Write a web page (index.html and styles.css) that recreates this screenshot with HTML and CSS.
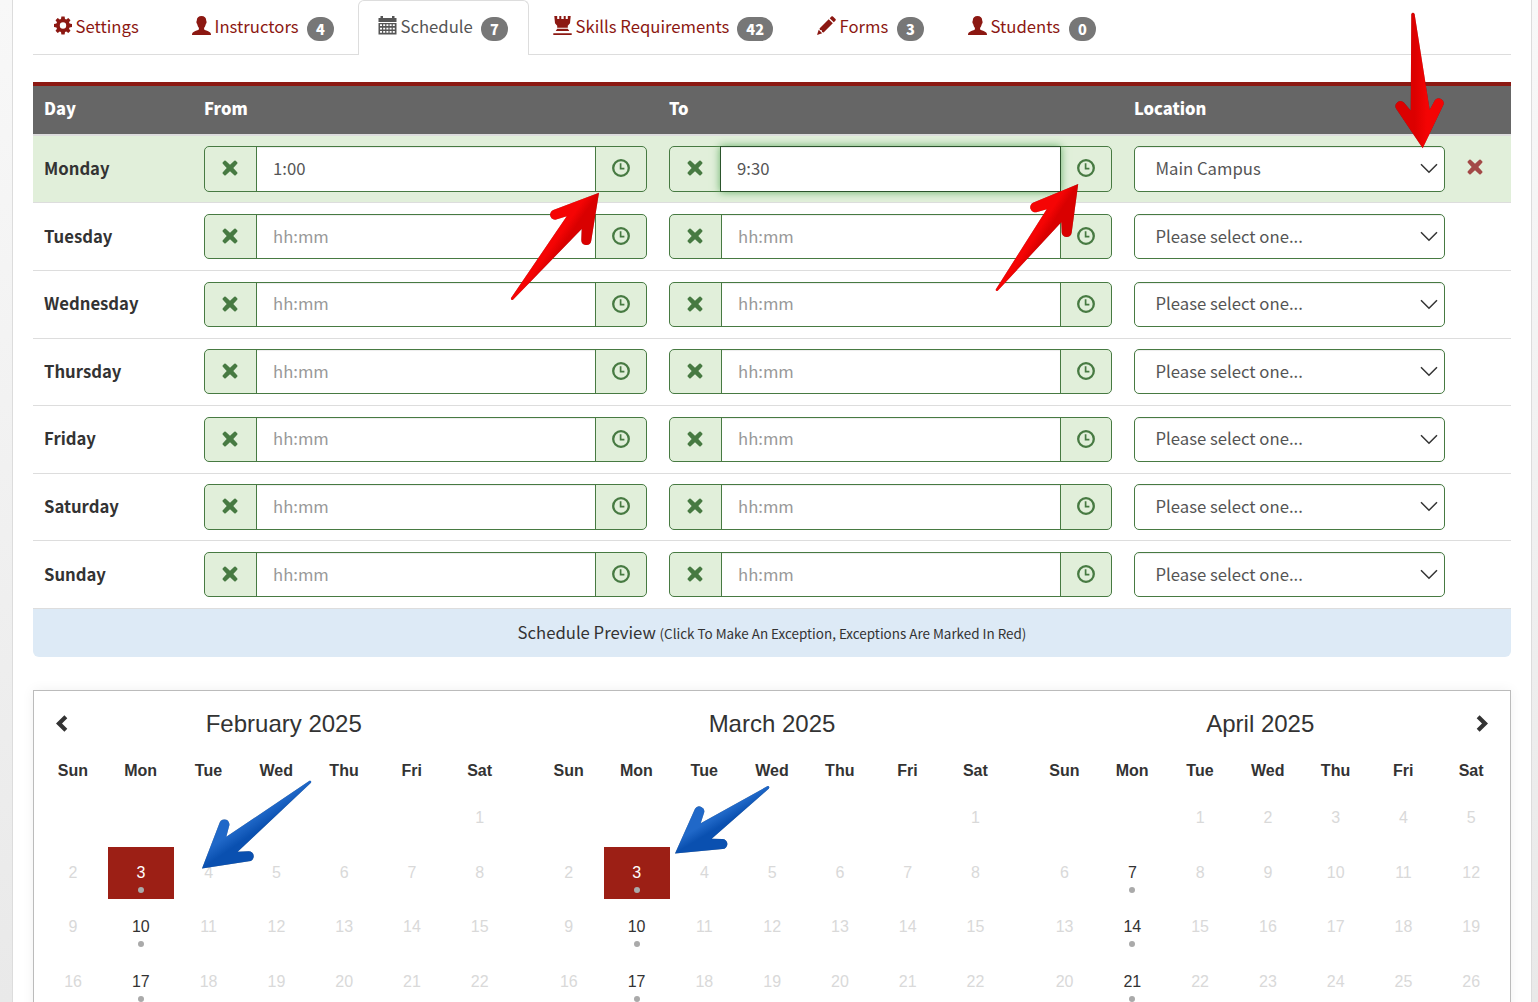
FILE: index.html
```html
<!DOCTYPE html>
<html lang="en">
<head>
  <meta charset="UTF-8">
  <title>Schedule</title>
  <meta name="viewport" content="width=device-width, initial-scale=1.0">
  <link rel="stylesheet" href="styles.css">
</head>
<body>
  <svg class="sprite" aria-hidden="true">
    <symbol id="i-gear" viewBox="0 0 18 18">
      <path fill-rule="evenodd" d="M7.4 0h3.2l.4 2.4 1.3.6 2-1.5 2.2 2.2-1.5 2 .6 1.3 2.4.4v3.2l-2.4.4-.6 1.3 1.5 2-2.2 2.2-2-1.5-1.3.6-.4 2.4H7.4L7 15.600l-1.300-.6-2 1.500-2.200-2.200 1.500-2-.6-1.300L0 10.600V7.400L2.400 7 3 5.700 1.500 3.700l2.200-2.200 2 1.500L7 2.400zM9 5.800a3.200 3.200 0 1 0 0 6.400 3.200 3.200 0 0 0 0-6.400z"/>
    </symbol>
    <symbol id="i-user" viewBox="0 0 19 19">
      <path d="M9.500 0c2.900 0 4.700 1.700 4.700 4.200 0 .7.5 1 .4 2.100-.1 1-.6 1.300-.9 2.100-.4 1.500-.9 2.500-1.600 3.300v1.900c1.600 1 4.500 1.600 5.700 2.600 1 .8 1.200 1.700 1.200 2.800H0c0-1.100.2-2 1.200-2.800 1.200-1 4.100-1.600 5.700-2.600v-1.900c-.7-.8-1.200-1.800-1.600-3.300-.3-.8-.8-1.100-.9-2.100-.1-1.100.4-1.400.4-2.100C4.800 1.700 6.600 0 9.500 0z"/>
    </symbol>
    <symbol id="i-calendar" viewBox="0 0 18 19">
      <path fill-rule="evenodd" d="M0 2h2V0h2.500v2h9V0H16v2h2v4H0zM0 7h18v11.500H0zM1.500 8.300v1.700h2V8.300zM4.700 8.300v1.700h2V8.300zM7.900 8.300v1.700h2V8.300zM11.100 8.300v1.700h2V8.300zM14.300 8.300v1.700h2V8.300zM1.500 11.700v1.700h2v-1.700zM4.700 11.700v1.700h2v-1.700zM7.900 11.700v1.700h2v-1.700zM11.100 11.700v1.700h2v-1.700zM14.300 11.700v1.700h2v-1.700zM1.500 15.100v1.700h2v-1.700zM4.700 15.100v1.700h2v-1.700zM7.900 15.100v1.700h2v-1.700zM11.100 15.100v1.700h2v-1.700zM14.300 15.100v1.700h2v-1.700z"/>
    </symbol>
    <symbol id="i-rook" viewBox="0 0 19 19">
      <path d="M1.300 0h2.900v3h2.100V0h2v3h2.400V0h2v3h2.100V0h2.900l-.7 7.300-2.200 2.400v2.100H4.200V9.700L2 7.300zM4.200 12.700h10.600l1.500 2.400H2.700zM.3 17.200h18.400V19H.3z"/>
    </symbol>
    <symbol id="i-pencil" viewBox="0 0 19 19">
      <path d="M14.400.5c.5-.5 1-.5 1.500 0l2.600 2.600c.5.5.5 1 0 1.500l-1.700 1.700-4.100-4.100zM11.700 3.200l4.100 4.100L6.600 16.500l-1.500-.5-.3-1.800-1.800-.3-.5-1.500zM1.700 13.700l3.500 3.500L0 19z"/>
    </symbol>
    <symbol id="i-remove" viewBox="0 0 16 16">
      <path d="M3.700.8Q3 .1 2.300.8L.8 2.300q-.7.7 0 1.400L4.700 8 .8 12.300q-.7.700 0 1.400l1.500 1.500q.7.700 1.400 0L8 11.300l4.300 3.900q.7.700 1.400 0l1.500-1.500q.7-.7 0-1.400L11.300 8l3.900-4.300q.7-.7 0-1.400L13.700.8q-.7-.7-1.400 0L8 4.700z"/>
    </symbol>
    <symbol id="i-clock" viewBox="0 0 18 18">
      <circle cx="9" cy="9" r="7.800" fill="none" stroke="currentColor" stroke-width="2.300"/>
      <path d="M8.600 4.200v5.400h3.800" fill="none" stroke="currentColor" stroke-width="1.700"/>
    </symbol>
    <symbol id="i-down" viewBox="0 0 18 11">
      <path d="M1 1.200l8 8 8-8" fill="none" stroke="currentColor" stroke-width="1.500"/>
    </symbol>
    <symbol id="i-left" viewBox="0 0 12 17">
      <path d="M11.300 3.200L8.400.3 0 8.500l8.400 8.200 2.900-2.900L6 8.500z"/>
    </symbol>
    <symbol id="i-right" viewBox="0 0 12 17">
      <path d="M.7 3.200L3.600.3 12 8.500l-8.400 8.200-2.900-2.900L6 8.500z"/>
    </symbol>
  </svg>

  <main class="panel">
    <nav class="tabs">
      <a class="tab tab-settings"><svg><use href="#i-gear"/></svg><span>Settings</span></a>
      <a class="tab tab-instructors"><svg><use href="#i-user"/></svg><span>Instructors</span><b class="badge">4</b></a>
      <a class="tab tab-schedule active"><svg><use href="#i-calendar"/></svg><span>Schedule</span><b class="badge">7</b></a>
      <a class="tab tab-skills"><svg><use href="#i-rook"/></svg><span>Skills Requirements</span><b class="badge">42</b></a>
      <a class="tab tab-forms"><svg><use href="#i-pencil"/></svg><span>Forms</span><b class="badge">3</b></a>
      <a class="tab tab-students"><svg><use href="#i-user"/></svg><span>Students</span><b class="badge">0</b></a>
    </nav>

    <section class="schedule">
      <div class="row head">
        <div>Day</div>
        <div>From</div>
        <div>To</div>
        <div>Location</div>
      </div>
      <div id="days"></div>
      <div class="preview">Schedule Preview <small>(Click To Make An Exception, Exceptions Are Marked In Red)</small></div>
    </section>

    <section class="calendar" id="calendar"></section>
  </main>

  <svg class="arrows" viewBox="0 0 1538 1002">
    <defs>
      <linearGradient id="red-up" x1="0.38" y1="0.4" x2="0.62" y2="0.6">
        <stop offset="0.4" stop-color="#f50404"/>
        <stop offset="0.7" stop-color="#d90000"/>
      </linearGradient>
      <linearGradient id="red-down" x1="0" y1="0" x2="1" y2="0">
        <stop offset="0.4" stop-color="#dc0000"/>
        <stop offset="0.65" stop-color="#f40404"/>
      </linearGradient>
      <linearGradient id="blue" x1="0.35" y1="0.35" x2="0.6" y2="0.65">
        <stop offset="0.35" stop-color="#2068c8"/>
        <stop offset="0.7" stop-color="#0a50b0"/>
      </linearGradient>
    </defs>
    <path fill="url(#red-up)" d="M511 298L566.700 216.300 557 219.300A5 5 0 0 1 553.300 210L599 192.800 591.200 241A5 5 0 0 1 581.300 240L581.700 229 513 299.700Q510.500 300.500 511 298z"/>
    <path fill="url(#red-up)" d="M995.700 289.500L1046.700 209.300 1037.200 212A5 5 0 0 1 1033.500 202.500L1078.200 184 1071.700 232.500A5 5 0 0 1 1061.700 231.500L1061.300 222.300 997.700 290.700Q995.500 291.500 995.700 289.500z"/>
    <path fill="url(#red-down)" d="M1411.300 14L1410.700 110.500 1403.900 102.600A5 5 0 0 0 1396 108.500L1422.700 148.200 1443.600 104.500A5 5 0 0 0 1435 100L1429.700 109.700 1414.600 14Q1413 11.500 1411.300 14z"/>
    <path fill="url(#blue)" d="M309.500 780.700L226.300 836.800 229 826.500A5 5 0 0 0 219.700 822.500L202 868.500 249 861.300A5 5 0 0 0 248.500 851.300L237.700 851.700 311 782.800Q311.800 780.300 309.500 780.700z"/>
    <path fill="url(#blue)" d="M767.700 786L700.700 823.300 704 813A5 5 0 0 0 695 808.800L675 853.500 722.500 849.100A5 5 0 0 0 722.300 839.100L711.700 838.700 769 788.500Q770 786 767.700 786z"/>
  </svg>

  <script src="script.js"></script>
</body>
</html>
```
FILE: styles.css
```css
* {
  box-sizing: border-box;
}

html, body {
  height: 1002px;
  margin: 0;
  overflow: hidden;
}

body {
  position: relative;
  padding: 0 6px 0 12px;
  background: linear-gradient(#f8f8f8, #e9e9e9);
  font-family: "Noto Sans CJK JP", "Noto Sans", sans-serif;
  font-size: 16.700px;
  color: #333;
}

svg {
  fill: currentColor;
}

.sprite {
  position: absolute;
  width: 0;
  height: 0;
}

.panel {
  height: 1002px;
  padding: 0 20px;
  background: #fff;
  border: solid #dcdcdc;
  border-width: 0 1px;
  overflow: hidden;
}

/* tabs */
.tabs {
  display: flex;
  gap: 4px;
  height: 55px;
  border-bottom: 1px solid #ddd;
}

.tab {
  display: flex;
  height: 55px;
  padding: 0 20px;
  color: #8c1812;
  line-height: 53px;
}

.tab svg {
  flex: none;
  width: 19px;
  height: 19px;
  margin: 16px 3.500px 0 0;
}

.tab.active {
  padding: 0 20px 0 19px;
  color: #555;
  line-height: 51px;
  background: #fff;
  border: 1px solid #ddd;
  border-bottom: 0;
  border-radius: 6px 6px 0 0;
}

.tab.active svg {
  margin-top: 15px;
}

.tab-settings {
  width: 135px;
  padding-left: 21px;
}

.tab-settings svg {
  width: 18px;
}

.tab-instructors { width: 182px; }
.tab-schedule { width: 171px; }
.tab-skills { width: 260px; }
.tab-forms { width: 147px; }
.tab-students { width: 168px; }

.badge {
  height: 24px;
  min-width: 27px;
  margin: 17px 0 0 auto;
  padding: 0 9px;
  border-radius: 12px;
  background: #777;
  color: #fff;
  font-size: 14.500px;
  font-weight: 900;
  line-height: 24px;
  text-align: center;
}

.active .badge {
  margin-top: 16px;
}

/* schedule table */
.schedule {
  margin-top: 27px;
}

.row {
  display: grid;
  grid-template-columns: 160px 465px 465px 333px 1fr;
  align-items: center;
  height: 67.640px;
  border-top: 1px solid #ddd;
}

.row > div {
  padding: 0 11px;
}

.row.head {
  height: 53.700px;
  padding-bottom: 3px;
  background: #666;
  border-top: 4px solid #8c1812;
  border-bottom: 2px solid #ddd;
  color: #fff;
  font-size: 16.500px;
  font-weight: 900;
}

.row.selected {
  height: 66.600px;
  background: #e1efda;
  border-top: 0;
}

.row > .day {
  padding-bottom: 2px;
  font-weight: bold;
}

.time {
  display: flex;
  height: 45.300px;
  border: 1px solid #477a42;
  border-radius: 5px;
  background: #e1efda;
  color: #477a42;
}

.addon {
  display: flex;
  flex: none;
  justify-content: center;
  width: 51px;
  padding-top: 13px;
}

.addon:last-child {
  width: 50px;
}

.addon svg {
  width: 16px;
  height: 16px;
  margin-left: -1px;
}

.addon .clock {
  width: 18px;
  height: 18px;
  margin: -1px 0 0;
}

.time input {
  flex: 1;
  min-width: 0;
  padding: 0 16px 2px;
  border: solid #477a42;
  border-width: 0 1px;
  outline: 0;
  background: #fff;
  box-shadow: inset 0 1px 1px rgba(0, 0, 0, .075);
  color: #555;
  font: inherit;
}

.time input::placeholder {
  color: #999;
}

.time input.focused {
  margin: -1px 0 -1px -1px;
  border: 1px solid #2b542c;
  box-shadow: inset 0 1px 1px rgba(0, 0, 0, .075), 0 0 8px #67b168;
}

.location {
  position: relative;
}

.location select {
  display: block;
  width: 100%;
  height: 45.300px;
  padding: 0 20.500px 2px;
  appearance: none;
  border: 1px solid #477a42;
  border-radius: 5px;
  background: #fff;
  box-shadow: inset 0 1px 1px rgba(0, 0, 0, .075);
  color: #555;
  font: inherit;
}

.location svg {
  position: absolute;
  top: 17px;
  right: 18px;
  width: 18px;
  height: 11px;
}

.clear svg {
  display: block;
  width: 16px;
  height: 16px;
  margin: -4px 0 0;
  color: #a34a47;
}

.preview {
  height: 49px;
  border-top: 1px solid #ddd;
  border-radius: 0 0 6px 6px;
  background: #ddeaf6;
  line-height: 47px;
  text-align: center;
}

.preview small {
  font-size: 13.450px;
}

/* calendar */
.calendar {
  display: flex;
  justify-content: space-between;
  height: 330px;
  margin-top: 32.700px;
  padding: 18px 5px 0;
  border: 1px solid #bbb;
  box-shadow: 0 0 12px rgba(0, 0, 0, .06);
  font-family: "Liberation Sans", Arial, sans-serif;
  font-size: 16px;
}

.month {
  width: 474.500px;
}

.month-head {
  display: flex;
  align-items: center;
  height: 30px;
  padding: 0 17px;
}

.month-head h3 {
  flex: 1;
  margin: 0;
  font-size: 24px;
  font-weight: normal;
  text-align: center;
}

.month-head svg {
  flex: none;
  width: 12px;
  height: 17px;
}

.month-head .prev {
  margin-right: 3px;
}

.month-head .next {
  margin-left: 3px;
}

.week {
  display: grid;
  grid-template-columns: repeat(7, 1fr);
  height: 54.600px;
  text-align: center;
}

.week.names {
  height: 53.200px;
  padding-top: 23px;
  font-weight: bold;
}

.date {
  height: 52px;
  margin: 0 .7px 0 1px;
  padding-top: 17px;
  color: #d9d9d9;
}

.date.on {
  color: #333;
}

.date.on::after {
  content: "";
  display: block;
  width: 6px;
  height: 6px;
  margin: 5px auto 0;
  border-radius: 50%;
  background: #aaa;
}

.date.on.picked {
  background: #9c1f15;
  color: #fff;
}

/* pointers drawn over the page */
.arrows {
  position: absolute;
  top: 0;
  left: 0;
  width: 1538px;
  height: 1002px;
  filter: drop-shadow(0 .5px .5px rgba(0, 0, 0, .4));
  pointer-events: none;
}
```
FILE: script.js
```js
const days = [
  { name: 'Monday', from: '1:00', to: '9:30', location: 'Main Campus' },
  { name: 'Tuesday' },
  { name: 'Wednesday' },
  { name: 'Thursday' },
  { name: 'Friday' },
  { name: 'Saturday' },
  { name: 'Sunday' }
];

const icon = (name, cls = '') => `<svg class="${cls}"><use href="#i-${name}"/></svg>`;

const time = (value, focused) => `
  <div><div class="time">
    <span class="addon">${icon('remove')}</span>
    <input type="text" placeholder="hh:mm" value="${value || ''}" class="${focused ? 'focused' : ''}">
    <span class="addon">${icon('clock', 'clock')}</span>
  </div></div>`;

document.getElementById('days').innerHTML = days.map(d => `
  <div class="row ${d.location ? 'selected' : ''}">
    <div class="day">${d.name}</div>
    ${time(d.from)}
    ${time(d.to, d.to)}
    <div class="location"><select><option>${d.location || 'Please select one...'}</option></select>${icon('down')}</div>
    <div class="clear">${d.location ? icon('remove') : ''}</div>
  </div>`).join('');

// start = weekday of the 1st
const months = [
  { name: 'February 2025', start: 6, on: [3, 10, 17], picked: 3, prev: true },
  { name: 'March 2025', start: 6, on: [3, 10, 17], picked: 3 },
  { name: 'April 2025', start: 2, on: [7, 14, 21], next: true }
];
const names = ['Sun', 'Mon', 'Tue', 'Wed', 'Thu', 'Fri', 'Sat'];

function weeks(m) {
  let html = '';
  for (let w = 0; w < 4; w++) {
    html += '<div class="week">';
    for (let i = 0; i < 7; i++) {
      const n = w * 7 + i - m.start + 1;
      const cls = (m.on.includes(n) ? ' on' : '') + (m.picked === n ? ' picked' : '');
      html += n > 0 ? `<div class="date${cls}">${n}</div>` : '<div></div>';
    }
    html += '</div>';
  }
  return html;
}

document.getElementById('calendar').innerHTML = months.map(m => `
  <div class="month">
    <div class="month-head">${m.prev ? icon('left', 'prev') : ''}<h3>${m.name}</h3>${m.next ? icon('right', 'next') : ''}</div>
    <div class="week names">${names.map(n => `<div>${n}</div>`).join('')}</div>
    ${weeks(m)}
  </div>`).join('');
```
